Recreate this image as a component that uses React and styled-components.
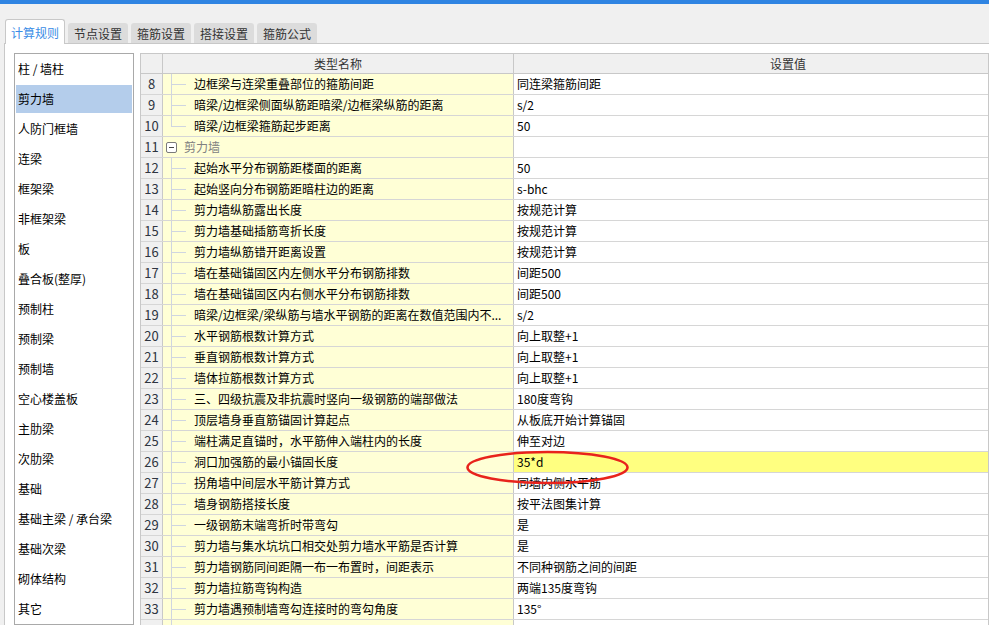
import styled, { createGlobalStyle } from 'styled-components';

const GlobalStyle = createGlobalStyle`
  html, body {
    margin: 0;
    height: 100%;
    overflow: hidden;
    background: #f0f0f0;
  }
  body {
    font-family: "Noto Sans CJK SC", "Microsoft YaHei", sans-serif;
    font-size: 12px;
    color: #000;
  }
`;

const tabs = ['计算规则', '节点设置', '箍筋设置', '搭接设置', '箍筋公式'];

const categories = [
  '柱 / 墙柱',
  '剪力墙',
  '人防门框墙',
  '连梁',
  '框架梁',
  '非框架梁',
  '板',
  '叠合板(整厚)',
  '预制柱',
  '预制梁',
  '预制墙',
  '空心楼盖板',
  '主肋梁',
  '次肋梁',
  '基础',
  '基础主梁 / 承台梁',
  '基础次梁',
  '砌体结构',
  '其它',
];

const rows = [
  { no: 8, name: '边框梁与连梁重叠部位的箍筋间距', value: '同连梁箍筋间距', branch: 'mid' },
  { no: 9, name: '暗梁/边框梁侧面纵筋距暗梁/边框梁纵筋的距离', value: 's/2', branch: 'mid' },
  { no: 10, name: '暗梁/边框梁箍筋起步距离', value: '50', branch: 'last' },
  { no: 11, name: '剪力墙', group: true },
  { no: 12, name: '起始水平分布钢筋距楼面的距离', value: '50', branch: 'mid' },
  { no: 13, name: '起始竖向分布钢筋距暗柱边的距离', value: 's-bhc', branch: 'mid' },
  { no: 14, name: '剪力墙纵筋露出长度', value: '按规范计算', branch: 'mid' },
  { no: 15, name: '剪力墙基础插筋弯折长度', value: '按规范计算', branch: 'mid' },
  { no: 16, name: '剪力墙纵筋错开距离设置', value: '按规范计算', branch: 'mid' },
  { no: 17, name: '墙在基础锚固区内左侧水平分布钢筋排数', value: '间距500', branch: 'mid' },
  { no: 18, name: '墙在基础锚固区内右侧水平分布钢筋排数', value: '间距500', branch: 'mid' },
  { no: 19, name: '暗梁/边框梁/梁纵筋与墙水平钢筋的距离在数值范围内不...', value: 's/2', branch: 'mid' },
  { no: 20, name: '水平钢筋根数计算方式', value: '向上取整+1', branch: 'mid' },
  { no: 21, name: '垂直钢筋根数计算方式', value: '向上取整+1', branch: 'mid' },
  { no: 22, name: '墙体拉筋根数计算方式', value: '向上取整+1', branch: 'mid' },
  { no: 23, name: '三、四级抗震及非抗震时竖向一级钢筋的端部做法', value: '180度弯钩', branch: 'mid' },
  { no: 24, name: '顶层墙身垂直筋锚固计算起点', value: '从板底开始计算锚固', branch: 'mid' },
  { no: 25, name: '端柱满足直锚时，水平筋伸入端柱内的长度', value: '伸至对边', branch: 'mid' },
  { no: 26, name: '洞口加强筋的最小锚固长度', value: '35*d', branch: 'mid', active: true },
  { no: 27, name: '拐角墙中间层水平筋计算方式', value: '同墙内侧水平筋', branch: 'mid' },
  { no: 28, name: '墙身钢筋搭接长度', value: '按平法图集计算', branch: 'mid' },
  { no: 29, name: '一级钢筋末端弯折时带弯勾', value: '是', branch: 'mid' },
  { no: 30, name: '剪力墙与集水坑坑口相交处剪力墙水平筋是否计算', value: '是', branch: 'mid' },
  { no: 31, name: '剪力墙钢筋同间距隔一布一布置时，间距表示', value: '不同种钢筋之间的间距', branch: 'mid' },
  { no: 32, name: '剪力墙拉筋弯钩构造', value: '两端135度弯钩', branch: 'mid' },
  { no: 33, name: '剪力墙遇预制墙弯勾连接时的弯勾角度', value: '135°', branch: 'mid' },
  // next row only peeks in at the bottom edge
  { no: '', name: '', value: '', branch: 'mid' },
];

const App = () => {
  return (
    <Page>
      <GlobalStyle />
      <TopBar />
      <TabStrip>
        {tabs.map((t, i) => (
          <Tab key={t} $active={i === 0}>
            {t}
          </Tab>
        ))}
      </TabStrip>
      <Panel>
        <CategoryList>
          {categories.map((c, i) => (
            <CategoryItem key={c} $selected={i === 1}>
              {c}
            </CategoryItem>
          ))}
        </CategoryList>
        <TableWrap>
          <HeaderRow>
            <HeaderCell />
            <HeaderCell>类型名称</HeaderCell>
            <HeaderCell $offset>设置值</HeaderCell>
          </HeaderRow>
          {rows.map((r, i) => (
            <Row key={i}>
              <NoCell>{r.no}</NoCell>
              {r.group ? (
                <GroupCell>
                  <Toggle />
                  <GroupLabel>{r.name}</GroupLabel>
                </GroupCell>
              ) : (
                <NameCell $branch={r.branch}>{r.name}</NameCell>
              )}
              <ValueCell $active={r.active}>{r.value}</ValueCell>
            </Row>
          ))}
          <Ellipse width="167" height="38" viewBox="0 0 167 38">
            <ellipse
              cx="83.5"
              cy="18.5"
              rx="80"
              ry="15.5"
              fill="none"
              stroke="#e8231c"
              strokeWidth="2.6"
            />
          </Ellipse>
        </TableWrap>
      </Panel>
    </Page>
  );
};

const Page = styled.div`
  display: flex;
  flex-direction: column;
  height: 625px;
  overflow: hidden;
`;

const TopBar = styled.div`
  height: 4px;
  background: #2f84e2;
  flex-shrink: 0;
`;

const TabStrip = styled.div`
  display: flex;
  align-items: flex-end;
  gap: 3px;
  height: 39px;
  padding-left: 5px;
  flex-shrink: 0;
  position: relative;
  z-index: 1;
`;

const Tab = styled.div`
  box-sizing: border-box;
  width: 60px;
  display: flex;
  align-items: center;
  justify-content: center;
  border-radius: 3px 3px 0 0;
  height: ${(p) => (p.$active ? '25px' : '20px')};
  margin-bottom: ${(p) => (p.$active ? '-1px' : '0')};
  background: ${(p) => (p.$active ? '#ffffff' : '#dcdcdc')};
  border: ${(p) => (p.$active ? '1px solid #c8c8c8' : 'none')};
  border-bottom: none;
  color: ${(p) => (p.$active ? '#3a8de6' : '#333333')};
  padding-top: ${(p) => (p.$active ? '1px' : '0')};
`;

const Panel = styled.div`
  flex: 1;
  display: flex;
  gap: 6px;
  margin-left: 4px;
  padding: 9px 0 0 9px;
  background: #ffffff;
  border-top: 1px solid #c8c8c8;
  border-left: 1px solid #c8c8c8;
  min-height: 0;
`;

const CategoryList = styled.div`
  box-sizing: border-box;
  width: 120px;
  flex-shrink: 0;
  border: 1px solid #a9a9a9;
  padding: 1px;
  display: flex;
  flex-direction: column;
  gap: 2px;
`;

const CategoryItem = styled.div`
  height: 28px;
  line-height: 28px;
  padding-left: 2px;
  white-space: nowrap;
  flex-shrink: 0;
  background: ${(p) => (p.$selected ? '#b4cdeb' : 'transparent')};
`;

const TableWrap = styled.div`
  position: relative;
  box-sizing: border-box;
  width: 849px;
  flex-shrink: 0;
  border: 1px solid #c8c8c8;
  border-bottom: none;
  align-self: flex-start;
`;

const grid = `
  display: grid;
  grid-template-columns: 22px 351px 1fr;
`;

const HeaderRow = styled.div`
  ${grid}
  height: 20px;
  background: #f0f0f0;
  border-bottom: 1px solid #c8c8c8;
  box-sizing: border-box;
`;

const HeaderCell = styled.div`
  border-right: 1px solid #c8c8c8;
  text-align: center;
  line-height: 19px;
  color: #333333;
  padding-left: ${(p) => (p.$offset ? '74px' : '0')};
  &:last-child {
    border-right: none;
  }
`;

const Row = styled.div`
  ${grid}
  height: 21px;
  box-sizing: border-box;
  border-bottom: 1px solid #d6d6d6;
  line-height: 20px;
`;

const NoCell = styled.div`
  background: #f0f0f0;
  border-right: 1px solid #c8c8c8;
  text-align: center;
  color: #2e3440;
  font-size: 13px;
`;

const NameCell = styled.div`
  position: relative;
  background: #ffffd6;
  border-right: 1px solid #c8c8c8;
  padding-left: 31px;
  white-space: nowrap;
  overflow: hidden;

  &::before {
    content: '';
    position: absolute;
    left: 8px;
    top: 0;
    width: 1px;
    height: ${(p) => (p.$branch === 'last' ? '11px' : '21px')};
    background: #cfd5e0;
  }

  &::after {
    content: '';
    position: absolute;
    left: 9px;
    top: 10px;
    width: 14px;
    height: 1px;
    background: #cfd5e0;
  }
`;

const GroupCell = styled.div`
  display: flex;
  align-items: center;
  background: #ffffd6;
  border-right: 1px solid #c8c8c8;
  padding-left: 3px;
`;

const Toggle = styled.span`
  position: relative;
  box-sizing: border-box;
  width: 11px;
  height: 11px;
  border: 1px solid #7a7a7a;
  border-radius: 2px;
  background: #ffffff;

  &::after {
    content: '';
    position: absolute;
    left: 2px;
    top: 4px;
    width: 5px;
    height: 1px;
    background: #444444;
  }
`;

const GroupLabel = styled.span`
  margin-left: 7px;
  color: #808080;
`;

const ValueCell = styled.div`
  padding-left: 3px;
  white-space: nowrap;
  background: ${(p) => (p.$active ? '#ffff80' : '#ffffff')};
`;

const Ellipse = styled.svg`
  position: absolute;
  left: 323px;
  top: 395px;
  pointer-events: none;
`;

export default App;
